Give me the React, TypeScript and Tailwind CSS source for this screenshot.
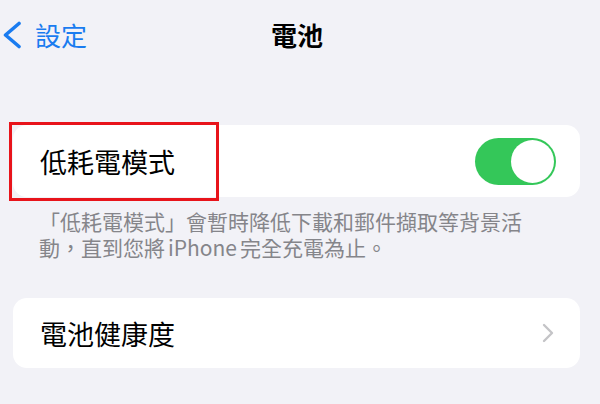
import React from 'react'

const font = { fontFamily: '"Noto Sans CJK TC", "Noto Sans", sans-serif' }

function Toggle() {
  return (
    <div className="flex h-[47px] w-[81px] items-center justify-end rounded-full bg-[#34c759] p-[2px]">
      <div className="h-[43px] w-[43px] rounded-full bg-white" />
    </div>
  )
}

export default function App() {
  return (
    <div className="relative h-[404px] w-[600px] overflow-hidden bg-[#f2f2f7]" style={font}>
      <div className="flex h-[69px] items-center">
        <div className="flex w-[194px] items-center pl-[1px] text-[26px] text-[#1a7cf0]">
          <svg width="22" height="28" viewBox="0 0 22 28" fill="none">
            <path d="M18 2.5 L4.5 14 L18 25.5" stroke="#1a7cf0" strokeWidth="3.6" strokeLinecap="round" strokeLinejoin="round" />
          </svg>
          <span className="ml-[12px] leading-none">設定</span>
        </div>
        <div className="w-[206px] text-center text-[26px] font-bold leading-none text-black">電池</div>
      </div>

      <div className="ml-[13px] mr-[20px] mt-[56px] flex h-[72px] items-center justify-between rounded-[14px] bg-white pl-[27px] pr-[24px]">
        <span className="text-[27px] leading-none text-black">低耗電模式</span>
        <Toggle />
      </div>

      <div className="mt-[11px] pl-[39px] text-[21px] leading-[26px] text-[#85858a]">
        <p>「低耗電模式」會暫時降低下載和郵件擷取等背景活</p>
        <p>
          動，直到您將<span className="mx-[3px]">iPhone</span>完全充電為止。
        </p>
      </div>

      <div className="ml-[13px] mr-[20px] mt-[38px] flex h-[70px] items-center justify-between rounded-[14px] bg-white pl-[27px] pr-[26px]">
        <span className="text-[27px] leading-none text-black">電池健康度</span>
        <svg width="12" height="20" viewBox="0 0 12 20" fill="none">
          <path d="M2 2 L10 10 L2 18" stroke="#c4c4c7" strokeWidth="2.4" strokeLinecap="round" strokeLinejoin="round" />
        </svg>
      </div>

      <div className="absolute left-[9px] top-[122px] h-[79px] w-[210px] border-[3px] border-[#e8141b]" />
    </div>
  )
}
